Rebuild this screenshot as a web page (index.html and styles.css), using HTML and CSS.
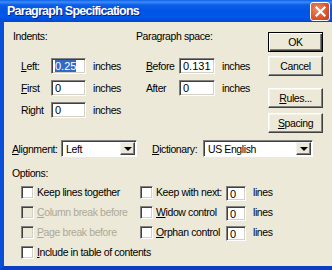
FILE: index.html
```html
<!DOCTYPE html>
<html lang="en">
<head>
    <meta charset="UTF-8">
    <title>Paragraph Specifications</title>
    <link rel="stylesheet" href="styles.css">
</head>
<body>

    <div class="window">
        <div class="titlebar">
            <span class="title">Paragraph Specifications</span>
            <span class="close">
                <svg width="11" height="11" viewBox="0 0 11 11">
                    <path d="M1.5 1.5 L9.5 9.5 M9.5 1.5 L1.5 9.5" stroke="#fff" stroke-width="2.2" stroke-linecap="square"/>
                </svg>
            </span>
        </div>

        <div class="frame">
            <div class="top">
                <div class="group indents">
                    <div class="heading">Indents:</div>
                    <div class="row">
                        <label class="lbl"><u>L</u>eft:</label>
                        <span class="field"><span class="sel">0.25</span></span>
                        <span class="unit">inches</span>
                    </div>
                    <div class="row">
                        <label class="lbl"><u>F</u>irst</label>
                        <span class="field">0</span>
                        <span class="unit">inches</span>
                    </div>
                    <div class="row">
                        <label class="lbl">Right</label>
                        <span class="field">0</span>
                        <span class="unit">inches</span>
                    </div>
                </div>

                <div class="group para">
                    <div class="heading">Paragraph space:</div>
                    <div class="row">
                        <label class="lbl"><u>B</u>efore</label>
                        <span class="field">0.131</span>
                        <span class="unit">inches</span>
                    </div>
                    <div class="row">
                        <label class="lbl">After</label>
                        <span class="field">0</span>
                        <span class="unit">inches</span>
                    </div>
                </div>

                <div class="buttons">
                    <button class="btn default">OK</button>
                    <button class="btn">Cancel</button>
                    <button class="btn gap"><u>R</u>ules...</button>
                    <button class="btn"><u>S</u>pacing</button>
                </div>
            </div>

            <div class="combos">
                <label class="combo-lbl align-lbl"><u>A</u>lignment:</label>
                <span class="combo align">
                    <span class="combo-text">Left</span>
                    <span class="arrow"></span>
                </span>
                <label class="combo-lbl dict-lbl"><u>D</u>ictionary:</label>
                <span class="combo dict">
                    <span class="combo-text">US English</span>
                    <span class="arrow"></span>
                </span>
            </div>

            <div class="heading options-heading">Options:</div>
            <div class="options">
                <div class="col">
                    <div class="opt"><span class="box"></span>Keep lines together</div>
                    <div class="opt off"><span class="box"></span><u>C</u>olumn break before</div>
                    <div class="opt off"><span class="box"></span><u>P</u>age break before</div>
                    <div class="opt"><span class="box"></span><u>I</u>nclude in table of contents</div>
                </div>
                <div class="col col2">
                    <div class="opt"><span class="box"></span><span class="opt-text">Keep with next:</span><span class="field small">0</span><span class="unit">lines</span></div>
                    <div class="opt"><span class="box"></span><span class="opt-text"><u>W</u>idow control</span><span class="field small">0</span><span class="unit">lines</span></div>
                    <div class="opt"><span class="box"></span><span class="opt-text"><u>O</u>rphan control</span><span class="field small">0</span><span class="unit">lines</span></div>
                </div>
            </div>
        </div>
    </div>

</body>
</html>
```

FILE: styles.css
```css
body {
    margin: 0;
    font-family: 'Liberation Sans', Arial, sans-serif;
    font-size: 10.5px;
    letter-spacing: -0.4px;
    color: #000;
    background: #ece9d8;
}

.window {
    width: 332px;
    height: 270px;
    display: flex;
    flex-direction: column;
    overflow: hidden;
}

.titlebar {
    height: 22px;
    flex: none;
    display: flex;
    align-items: center;
    justify-content: space-between;
    padding: 0 2px 0 7px;
    background: linear-gradient(to bottom, #0a5fe8 0, #3d8cf7 2px, #0a5ee8 5px, #0054e3 11px, #0058e8 17px, #0046d0 22px);
}

.title {
    color: #fff;
    font-weight: bold;
    font-size: 12.5px;
    letter-spacing: -0.75px;
    text-shadow: 1px 1px 0 #0a1e8c;
}

.close {
    width: 18px;
    height: 17px;
    margin-top: 1px;
    border: 1px solid #fff;
    border-radius: 3px;
    background: radial-gradient(circle at 35% 35%, #f08a62 0, #e2552b 55%, #c33d14 100%);
    display: flex;
    align-items: center;
    justify-content: center;
}

.frame {
    flex: 1;
    background: #ece9d8;
    border-left: 4px solid #0a4fd8;
    border-bottom: 4px solid #0a3fc0;
    padding-top: 8px;
}

.top {
    display: flex;
    height: 110px;
}

.heading {
    height: 13px;
    line-height: 13px;
}

.group .heading {
    margin-bottom: 15px;
}

.row {
    display: flex;
    align-items: center;
    height: 16px;
    margin-bottom: 6px;
}

.lbl {
    display: block;
}

.unit {
    margin-left: 7px;
}

.indents {
    flex: none;
    width: 123px;
    padding-left: 9px;
}

.indents .lbl {
    width: 30px;
    margin-left: 8px;
}

.indents .field {
    width: 35px;
}

.para {
    flex: none;
    width: 132px;
}

.para .lbl {
    width: 33px;
    margin-left: 10px;
}

.para .field {
    width: 36px;
}

.field {
    flex: none;
    box-sizing: border-box;
    height: 16px;
    padding: 1px 3px 0;
    line-height: 13px;
    font-size: 11px;
    letter-spacing: 0;
    background: #fff;
    border-top: 1px solid #808080;
    border-left: 1px solid #808080;
    border-right: 1px solid #fff;
    border-bottom: 1px solid #fff;
    box-shadow: inset 1px 1px 0 #404040, inset -1px -1px 0 #d4d0c8;
}

.sel {
    background: #316ac5;
    color: #fff;
}

.buttons {
    flex: none;
    width: 55px;
    display: flex;
    flex-direction: column;
    padding-top: 2px;
}

.btn {
    box-sizing: border-box;
    width: 55px;
    height: 20px;
    margin: 0 0 4px;
    padding: 0;
    font: inherit;
    letter-spacing: inherit;
    color: #000;
    background: #ece9d8;
    border: 1px solid;
    border-color: #fff #404040 #404040 #fff;
    box-shadow: inset -1px -1px 0 #808080, inset 1px 1px 0 #f4f3ee;
}

.btn.default {
    border-color: #000;
    box-shadow: inset 1px 1px 0 #fff, inset -1px -1px 0 #404040, inset -2px -2px 0 #808080;
}

.btn.gap {
    margin-top: 8px;
    margin-bottom: 5px;
}

.combos {
    display: flex;
    align-items: center;
    height: 17px;
    padding-left: 8px;
}

.combo-lbl {
    display: block;
    flex: none;
}

.align-lbl {
    width: 49px;
}

.dict-lbl {
    width: 51px;
    margin-left: 15px;
}

.combo {
    flex: none;
    box-sizing: border-box;
    height: 17px;
    display: flex;
    align-items: center;
    justify-content: space-between;
    background: #fff;
    border-top: 1px solid #808080;
    border-left: 1px solid #808080;
    border-right: 1px solid #fff;
    border-bottom: 1px solid #fff;
    box-shadow: inset 1px 1px 0 #404040;
}

.align {
    width: 76px;
}

.dict {
    width: 110px;
}

.combo-text {
    padding-left: 4px;
}

.arrow {
    box-sizing: border-box;
    width: 15px;
    height: 13px;
    margin-right: 1px;
    background: #ece9d8;
    border: 1px solid;
    border-color: #f4f3ee #404040 #404040 #f4f3ee;
    box-shadow: inset -1px -1px 0 #808080;
    display: flex;
    align-items: center;
    justify-content: center;
}

.arrow::after {
    content: "";
    border-left: 4px solid transparent;
    border-right: 4px solid transparent;
    border-top: 4px solid #000;
    margin-top: 1px;
}

.options-heading {
    margin-top: 10px;
    padding-left: 8px;
}

.options {
    display: flex;
    padding-top: 2px;
}

.col {
    flex: none;
    width: 119px;
    padding-left: 17px;
}

.col2 {
    width: auto;
    padding-left: 0;
}

.opt {
    display: flex;
    align-items: center;
    height: 20px;
    white-space: nowrap;
}

.box {
    flex: none;
    box-sizing: border-box;
    width: 13px;
    height: 13px;
    margin-right: 3px;
    background: #fff;
    border-top: 1px solid #808080;
    border-left: 1px solid #808080;
    border-right: 1px solid #fff;
    border-bottom: 1px solid #fff;
    box-shadow: inset 1px 1px 0 #404040, inset -1px -1px 0 #d4d0c8;
}

.off {
    color: #aca899;
}

.off .box {
    background: #ece9d8;
}

.opt-text {
    flex: none;
    width: 70px;
}

.field.small {
    width: 20px;
    height: 15px;
    margin-top: 3px;
}
```
